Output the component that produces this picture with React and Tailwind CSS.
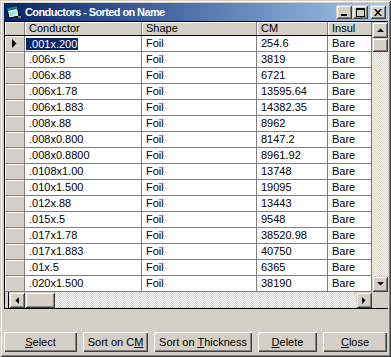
import React from "react";

const rows = [
  [".001x.200", "254.6"],
  [".006x.5", "3819"],
  [".006x.88", "6721"],
  [".006x1.78", "13595.64"],
  [".006x1.883", "14382.35"],
  [".008x.88", "8962"],
  [".008x0.800", "8147.2"],
  [".008x0.8800", "8961.92"],
  [".0108x1.00", "13748"],
  [".010x1.500", "19095"],
  [".012x.88", "13443"],
  [".015x.5", "9548"],
  [".017x1.78", "38520.98"],
  [".017x1.883", "40750"],
  [".01x.5", "6365"],
  [".020x1.500", "38190"],
];

// win2000 bevels
const bevel =
  "bg-[#d4d0c8] shadow-[inset_1px_1px_#d4d0c8,inset_-1px_-1px_#404040,inset_2px_2px_#fff,inset_-2px_-2px_#808080]";
const btnBevel =
  "bg-[#d4d0c8] shadow-[inset_1px_1px_#fff,inset_-1px_-1px_#404040,inset_-2px_-2px_#808080]";
const checker =
  "bg-[repeating-conic-gradient(#fff_0_25%,#d4d0c8_0_50%)] bg-[length:2px_2px]";

function Arrow({ dir }) {
  const pts = {
    up: "0,4 7,4 3.5,0.5",
    down: "0,0 7,0 3.5,3.5",
    left: "4,0 4,7 0.5,3.5",
    right: "0,0 0,7 3.5,3.5",
  }[dir];
  const horiz = dir === "left" || dir === "right";
  return (
    <div className={`w-[16px] h-[16px] flex items-center justify-center ${bevel}`}>
      <svg width={horiz ? 4 : 7} height={horiz ? 7 : 4} viewBox={horiz ? "0 0 4 7" : "0 0 7 4"}>
        <polygon points={pts} fill="#000" />
      </svg>
    </div>
  );
}

function TitleButton({ children, className = "" }) {
  return (
    <div className={`w-[16px] h-[14px] flex items-center justify-center ${bevel} ${className}`}>
      {children}
    </div>
  );
}

function Button({ width, children }) {
  return (
    <button className={`${width} h-[20px] flex items-center justify-center text-black ${btnBevel}`}>
      <span className="whitespace-pre">{children}</span>
    </button>
  );
}

function U({ children }) {
  return <span className="underline underline-offset-[1px]">{children}</span>;
}

export default function App() {
  return (
    <div className="w-[391px] h-[357px] bg-[#d4d0c8] pl-[4px] pr-[3px] pt-[3px] flex flex-col font-['Liberation_Sans',Arial,sans-serif] text-[11px] text-black shadow-[inset_1px_1px_#d4d0c8,inset_-1px_-1px_#404040,inset_2px_2px_#fff,inset_-2px_-2px_#808080]">
      {/* title bar */}
      <div className="h-[18px] flex items-center bg-linear-to-r from-[#0a246a] to-[#a6caf0] pl-[2px] pr-[2px]">
        <svg width="16" height="16" viewBox="0 0 16 16">
          <polygon points="1,4 11,2 13,12 3,14" fill="#fff" stroke="#000" strokeWidth="1" />
          <polygon points="1,4 11,2 11.6,5 1.6,7" fill="#008080" />
          <polygon points="3,8 10,6.6 11,11 4,12.4" fill="#a0e0e0" />
          <rect x="12" y="12" width="3" height="2" fill="#808080" />
        </svg>
        <span className="ml-[3px] text-white font-bold tracking-[-0.6px]">Conductors - Sorted on Name</span>
        <div className="ml-auto flex items-center">
          <TitleButton>
            <svg width="6" height="8" viewBox="0 0 6 8">
              <rect x="0" y="6" width="6" height="2" fill="#000" />
            </svg>
          </TitleButton>
          <TitleButton>
            <svg width="9" height="9" viewBox="0 0 9 9">
              <rect x="0.5" y="0.5" width="8" height="8" fill="none" stroke="#000" />
              <rect x="0" y="1" width="9" height="1" fill="#000" />
            </svg>
          </TitleButton>
          <TitleButton className="ml-[2px]">
            <svg width="8" height="7" viewBox="0 0 8 7">
              <path d="M0 0h2l2 2.5 2-2.5h2l-3 3.5 3 3.5h-2l-2-2.5-2 2.5h-2l3-3.5z" fill="#000" />
            </svg>
          </TitleButton>
        </div>
      </div>

      {/* grid */}
      <div className="h-[288px] flex border border-r-0 border-black bg-white">
        <div className="flex-1 flex flex-col overflow-hidden">
          <div className="h-[14px] flex shrink-0 border-b border-black">
            <div className="w-[20px] bg-[#d4d0c8] border-r border-[#808080] shadow-[inset_1px_1px_#fff]" />
            {[
              ["w-[117px]", "Conductor"],
              ["w-[115px]", "Shape"],
              ["w-[71px]", "CM"],
              ["w-[44px]", "Insul"],
            ].map(([w, t]) => (
              <div
                key={t}
                className={`${w} shrink-0 bg-[#d4d0c8] border-r border-[#808080] shadow-[inset_1px_1px_#fff] pl-[4px] flex items-center leading-none overflow-hidden whitespace-nowrap`}
              >
                {t}
              </div>
            ))}
          </div>
          {rows.map(([name, cm], i) => (
            <div key={i} className="h-[16px] flex shrink-0">
              <div className="w-[20px] shrink-0 bg-[#d4d0c8] border-r border-b border-[#808080] shadow-[inset_1px_1px_#fff] flex items-center pl-[7px]">
                {i === 0 && (
                  <svg width="5" height="9" viewBox="0 0 5 9">
                    <polygon points="0,0 0,9 4.5,4.5" fill="#000" />
                  </svg>
                )}
              </div>
              <div className="w-[117px] shrink-0 border-r border-b border-[#808080] flex items-center whitespace-nowrap">
                {i === 0 ? (
                  <span className="ml-[1px] pl-[3px] pr-[1px] bg-[#0a246a] text-white leading-[12px]">{name}</span>
                ) : (
                  <span className="pl-[4px]">{name}</span>
                )}
              </div>
              <div className="w-[115px] shrink-0 border-r border-b border-[#808080] flex items-center pl-[4px]">
                Foil
              </div>
              <div className="w-[71px] shrink-0 border-r border-b border-[#808080] flex items-center pl-[4px]">
                {cm}
              </div>
              <div className="w-[44px] shrink-0 border-r border-b border-[#808080] flex items-center pl-[4px]">
                Bare
              </div>
            </div>
          ))}
          {/* horizontal scrollbar */}
          <div className="h-[16px] flex shrink-0">
            <div className="w-[4px] bg-[#d4d0c8] border-r border-black" />
            <Arrow dir="left" />
            <div className={`w-[30px] h-[16px] ${bevel}`} />
            <div className={`flex-1 ${checker}`} />
            <Arrow dir="right" />
          </div>
        </div>
        {/* vertical scrollbar */}
        <div className="w-[16px] flex flex-col shrink-0">
          <Arrow dir="up" />
          <div className={`h-[14px] shrink-0 ${bevel}`} />
          <div className={`flex-1 ${checker}`} />
          <Arrow dir="down" />
          <div className="h-[16px] bg-[#d4d0c8]" />
        </div>
      </div>

      {/* buttons */}
      <div className="mt-[23px] flex justify-between pr-[1px]">
        <Button width="w-[73px]">
          <U>S</U>elect
        </Button>
        <Button width="w-[65px]">
          Sort on C<U>M</U>
        </Button>
        <Button width="w-[98px]">
          Sort on <U>T</U>hickness
        </Button>
        <Button width="w-[59px]">
          <U>D</U>elete
        </Button>
        <Button width="w-[64px]">
          <U>C</U>lose
        </Button>
      </div>
    </div>
  );
}
